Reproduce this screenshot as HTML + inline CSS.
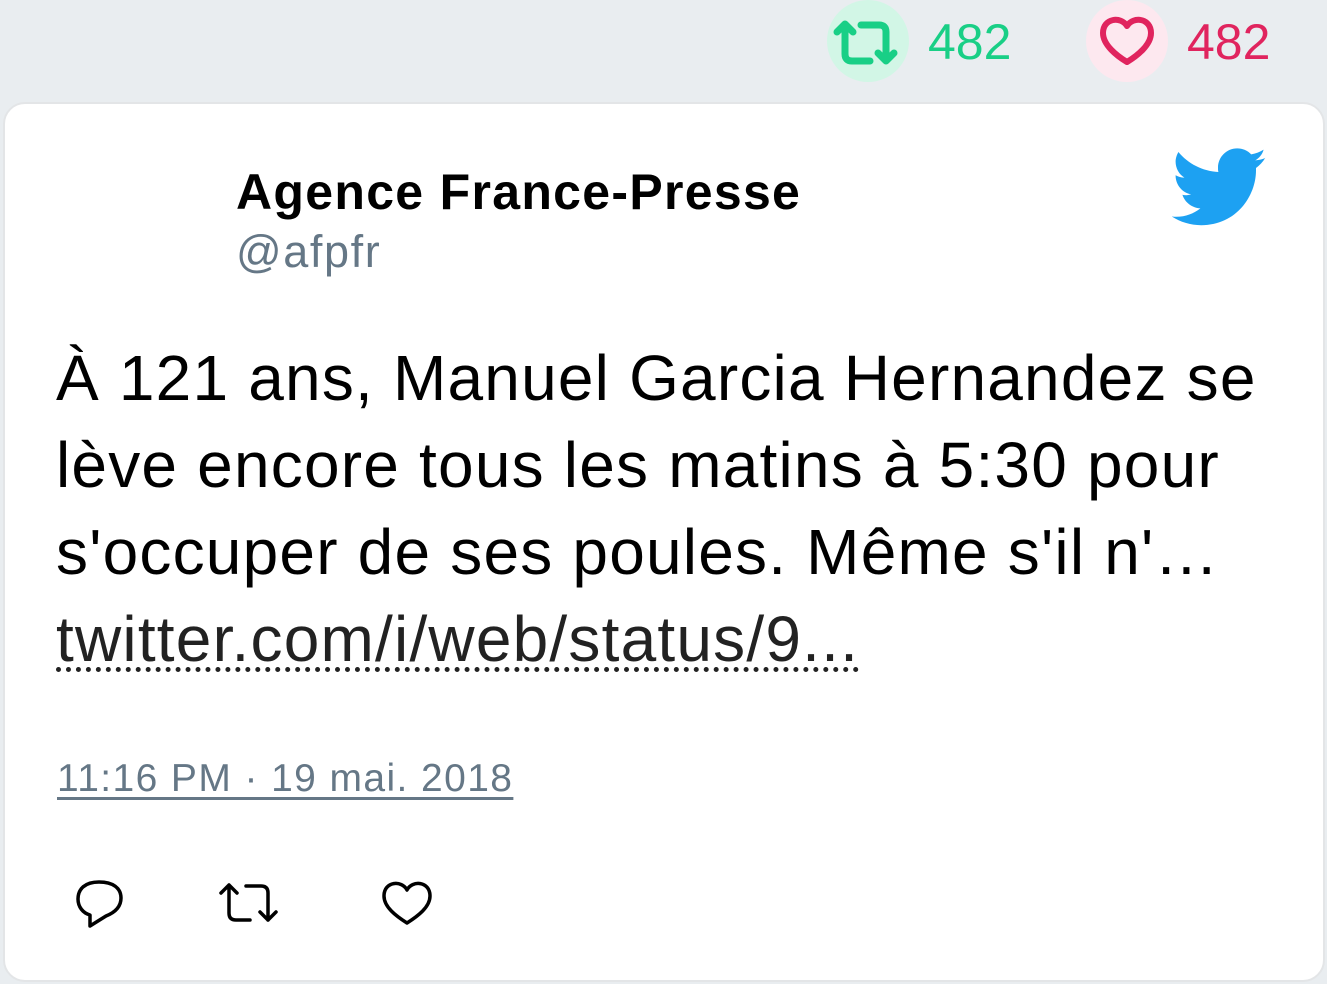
<!DOCTYPE html>
<html><head><meta charset="utf-8"><style>
*{margin:0;padding:0;box-sizing:border-box}
body{width:1327px;height:984px;background:#e9edf0;font-family:"Liberation Sans",sans-serif;position:relative;overflow:hidden}
.abs{position:absolute}
.card{left:3px;top:102px;width:1322px;height:880px;background:#fff;border:2px solid #e3e5e7;border-radius:22px}
.circ{width:82px;height:82px;border-radius:50%}
.num{font-size:50px;top:13px}
.body{left:56px;top:335px;font-size:64px;line-height:87px;color:#000;width:1250px;letter-spacing:1.2px}
.link{color:#222;text-decoration:underline dotted #222;text-decoration-thickness:5px;text-underline-offset:6px}
</style></head><body>
<div class="abs circ" style="left:827px;top:0;background:#d2f6e6"></div>
<svg class="abs" style="left:833px;top:20px" width="66" height="46" viewBox="0 0 66 46"><g fill="none" stroke="#19cf86" stroke-width="7" stroke-linecap="round" stroke-linejoin="round"><path d="M4 12 L12 4 L20 12 M12 4 V34 Q12 41 19 41 H37"/><path d="M28 5 H46 Q53 5 53 12 V41 M45 33 L53 41 L61 33"/></g></svg>
<div class="abs num" style="left:928px;color:#19cf86">482</div>
<div class="abs circ" style="left:1086px;top:0;background:#fde8ef"></div>
<svg class="abs" style="left:1099px;top:16px" width="56" height="50" viewBox="0 0 56 50"><path d="M28 10 C22 0 4 2 4 17 C4 29 18 40 28 46 C38 40 52 29 52 17 C52 2 34 0 28 10 Z" fill="none" stroke="#e0245e" stroke-width="6" stroke-linejoin="round"/></svg>
<div class="abs num" style="left:1187px;color:#e0245e">482</div>
<div class="abs card"></div>
<div class="abs" style="left:236px;top:163px;font-size:50px;font-weight:bold;color:#000;letter-spacing:1.3px">Agence France-Presse</div>
<div class="abs" style="left:236px;top:226px;font-size:45px;color:#657786;letter-spacing:1.6px">@afpfr</div>
<svg class="abs" style="left:1172px;top:146px" width="96" height="80" viewBox="0 0 24 20"><path fill="#1da1f2" d="M23.6 0.9c-.9.4-1.8.6-2.8.7 1-.6 1.8-1.5 2.1-2.7-.9.6-2 1-3.1 1.2C18.900 -.9 17.600 -1.400 16.300 -1.400c-2.700 0-4.800 2.200-4.800 4.800 0 .4 0 .8.1 1.100C7.600 4.300 4 2.400 1.600-.5c-.4.700-.7 1.600-.7 2.400 0 1.700.9 3.200 2.200 4-.8 0-1.500-.2-2.200-.6v.1c0 2.300 1.700 4.300 3.900 4.700-.4.100-.8.200-1.300.200-.3 0-.6 0-.9-.1.600 1.900 2.400 3.300 4.500 3.400-1.700 1.300-3.700 2.100-6 2.100-.4 0-.8 0-1.200-.1 2.100 1.400 4.700 2.200 7.400 2.200 8.900 0 13.700-7.400 13.700-13.700v-.6c.9-.7 1.700-1.500 2.300-2.500z" transform="translate(0,2)"/></svg>
<div class="abs body">À 121 ans, Manuel Garcia Hernandez se lève encore tous les matins à 5:30 pour s'occuper de ses poules. Même s'il n'… <span class="link">twitter.com/i/web/status/9...</span></div>
<div class="abs" style="left:57px;top:757px;font-size:39px;color:#657786;text-decoration:underline;text-underline-offset:6px;text-decoration-thickness:3px;letter-spacing:1.4px">11:16 PM · 19 mai. 2018</div>
<svg class="abs" style="left:75px;top:878px" width="50" height="52" viewBox="0 0 50 52"><path d="M24 4 C10 4 3 11 3 21 C3 29 8 35 15 37 V48 L31 38 C41 34 46 28 46 20 C46 10 38 4 24 4 Z" fill="none" stroke="#000" stroke-width="3.5" stroke-linejoin="round"/></svg>
<svg class="abs" style="left:218px;top:880px" width="66" height="46" viewBox="0 0 66 46"><g fill="none" stroke="#000" stroke-width="3.5" stroke-linecap="round" stroke-linejoin="round"><path d="M3 13 L11 5 L19 13 M11 5 V33 Q11 40 18 40 H32"/><path d="M28 6 H43 Q50 6 50 13 V40 M42 32 L50 40 L58 32"/></g></svg>
<svg class="abs" style="left:381px;top:879px" width="52" height="48" viewBox="0 0 52 48"><path d="M26 11 C21 1 3 2 3 17 C3 28 15 37 26 44 C37 37 49 28 49 17 C49 2 31 1 26 11 Z" fill="none" stroke="#000" stroke-width="3.5" stroke-linejoin="round"/></svg>
</body></html>
